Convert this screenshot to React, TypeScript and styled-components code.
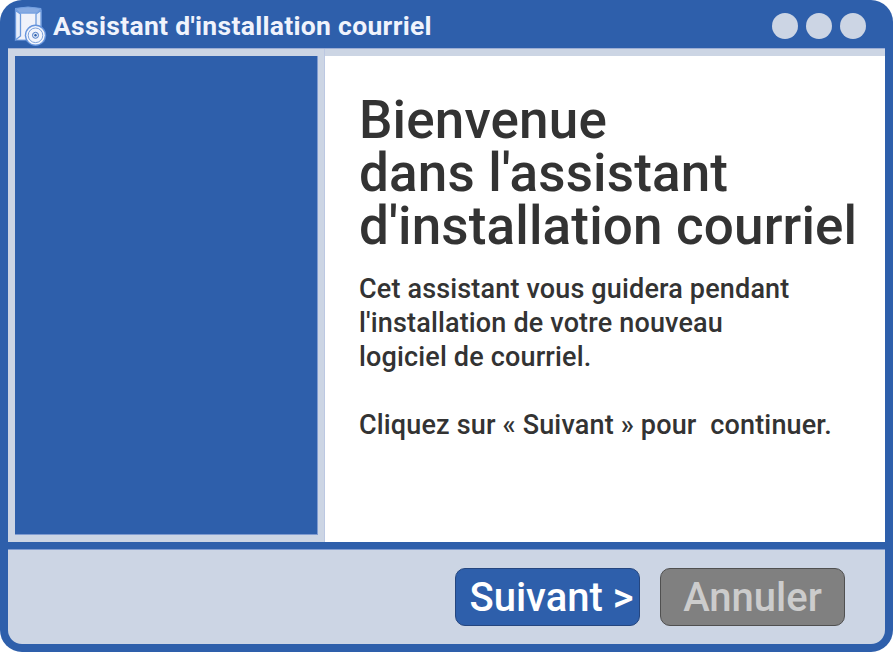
import React from "react";
import styled, { createGlobalStyle } from "styled-components";

const Global = createGlobalStyle`
  * { box-sizing: border-box; }
  body { margin: 0; background: #fff; font-family: Roboto, sans-serif; font-weight: 500; }
`;

const Window = styled.main`
  width: 893px;
  height: 652px;
  display: flex;
  flex-direction: column;
  padding: 0 8px 8px;
  border-radius: 22px;
  background: #2e5fab;
  overflow: hidden;
`;

const TitleBar = styled.header`
  height: 48px;
  flex: none;
  display: flex;
  align-items: center;
  padding: 4px 19px 0 6px;
`;

const Title = styled.div`
  flex: 1;
  margin-left: 6px;
  font-size: 26.5px;
  font-weight: 700;
  line-height: 36px;
  letter-spacing: 0.3px;
  color: #f0f3fc;
  white-space: nowrap;
`;

const Controls = styled.div`
  display: flex;
  gap: 8px;
`;

const Dot = styled.span`
  width: 26px;
  height: 26px;
  border-radius: 50%;
  background: #ccd5e4;
`;

const Body = styled.section`
  height: 494px;
  flex: none;
  display: flex;
  background: #ccd5e4;
  border-top: 1px solid #9daed5;
`;

const SidePane = styled.aside`
  width: 317px;
  padding: 7px 6px 7px 7px;
  border-right: 1px solid #bcc8e2;
`;

const Banner = styled.div`
  height: 100%;
  background: #2e5fab;
  border: solid #7f9bd0;
  border-width: 0 1px 1px 0;
`;

const Content = styled.div`
  flex: 1;
  margin-top: 7px;
  padding: 38px 0 0 34px;
  background: #fff;
  color: #333;
  white-space: pre;
`;

const Heading = styled.h1`
  margin: 0;
  font-size: 53px;
  font-weight: 500;
  line-height: 53px;
  letter-spacing: 0.15px;
`;

const Paragraph = styled.p<{ $top: number }>`
  margin: ${(p) => p.$top}px 0 0;
  font-size: 27px;
  line-height: 34px;
  letter-spacing: 0.16px;
`;

const Footer = styled.footer`
  flex: 1;
  margin-top: 7px;
  display: flex;
  justify-content: flex-end;
  gap: 20px;
  padding: 18px 40px 0 0;
  border-top: 1px solid #7f9bd0;
  border-radius: 0 0 14px 14px;
  background: #ccd5e4;
`;

const Button = styled.button<{ $muted?: boolean }>`
  width: 185px;
  height: 58px;
  padding: 2px 0 0 ${(p) => (p.$muted ? 0 : 8)}px;
  border: 1px solid ${(p) => (p.$muted ? "#505050" : "#25467f")};
  border-radius: 10px;
  background: ${(p) => (p.$muted ? "#808080" : "#2e5fab")};
  color: ${(p) => (p.$muted ? "#ccc" : "#fff")};
  font: 500 40px/54px Roboto, sans-serif;
  white-space: nowrap;
`;

const InstallerIcon = () => (
  <svg width="33" height="40" viewBox="14 7 33 40" fill="none">
    <path d="M15.500 10.500 19 14h18l4-3.500V41H15.500z" fill="#f0f2fa" stroke="#7fa6e3" />
    <path d="M15.500 11.500 20.500 15V37l-5 4z" fill="#e6edfa" stroke="#6c99dc" strokeWidth="1.300" />
    <path d="M41 11.500 36 15v22l5 4z" fill="#e6edfa" stroke="#6c99dc" strokeWidth="1.300" />
    <path d="M15 9.500q13-3 26 0L37 14H20z" fill="#86aae2" stroke="#74a0e1" />
    <circle cx="35.500" cy="36.300" r="10.700" fill="#6694dc" />
    <circle cx="35.500" cy="36.300" r="9.300" fill="#f2f5fd" />
    <circle cx="35.500" cy="36.300" r="7.300" stroke="#6f97d6" strokeWidth="0.900" />
    <circle cx="35.500" cy="36.300" r="3" fill="#e2eaf8" stroke="#517fc8" />
    <circle cx="35.500" cy="36.300" r="1.200" fill="#2e5fab" />
  </svg>
);

export default function App() {
  return (
    <>
      <Global />
      <Window>
        <TitleBar>
          <InstallerIcon />
          <Title>Assistant d'installation courriel</Title>
          <Controls>
            <Dot />
            <Dot />
            <Dot />
          </Controls>
        </TitleBar>
        <Body>
          <SidePane>
            <Banner />
          </SidePane>
          <Content>
            <Heading>{"Bienvenue\ndans l'assistant\nd'installation courriel"}</Heading>
            <Paragraph $top={19}>
              {"Cet assistant vous guidera pendant\nl'installation de votre nouveau\nlogiciel de courriel."}
            </Paragraph>
            <Paragraph $top={34}>{"Cliquez sur « Suivant » pour  continuer."}</Paragraph>
          </Content>
        </Body>
        <Footer>
          <Button>Suivant &gt;</Button>
          <Button $muted>Annuler</Button>
        </Footer>
      </Window>
    </>
  );
}
